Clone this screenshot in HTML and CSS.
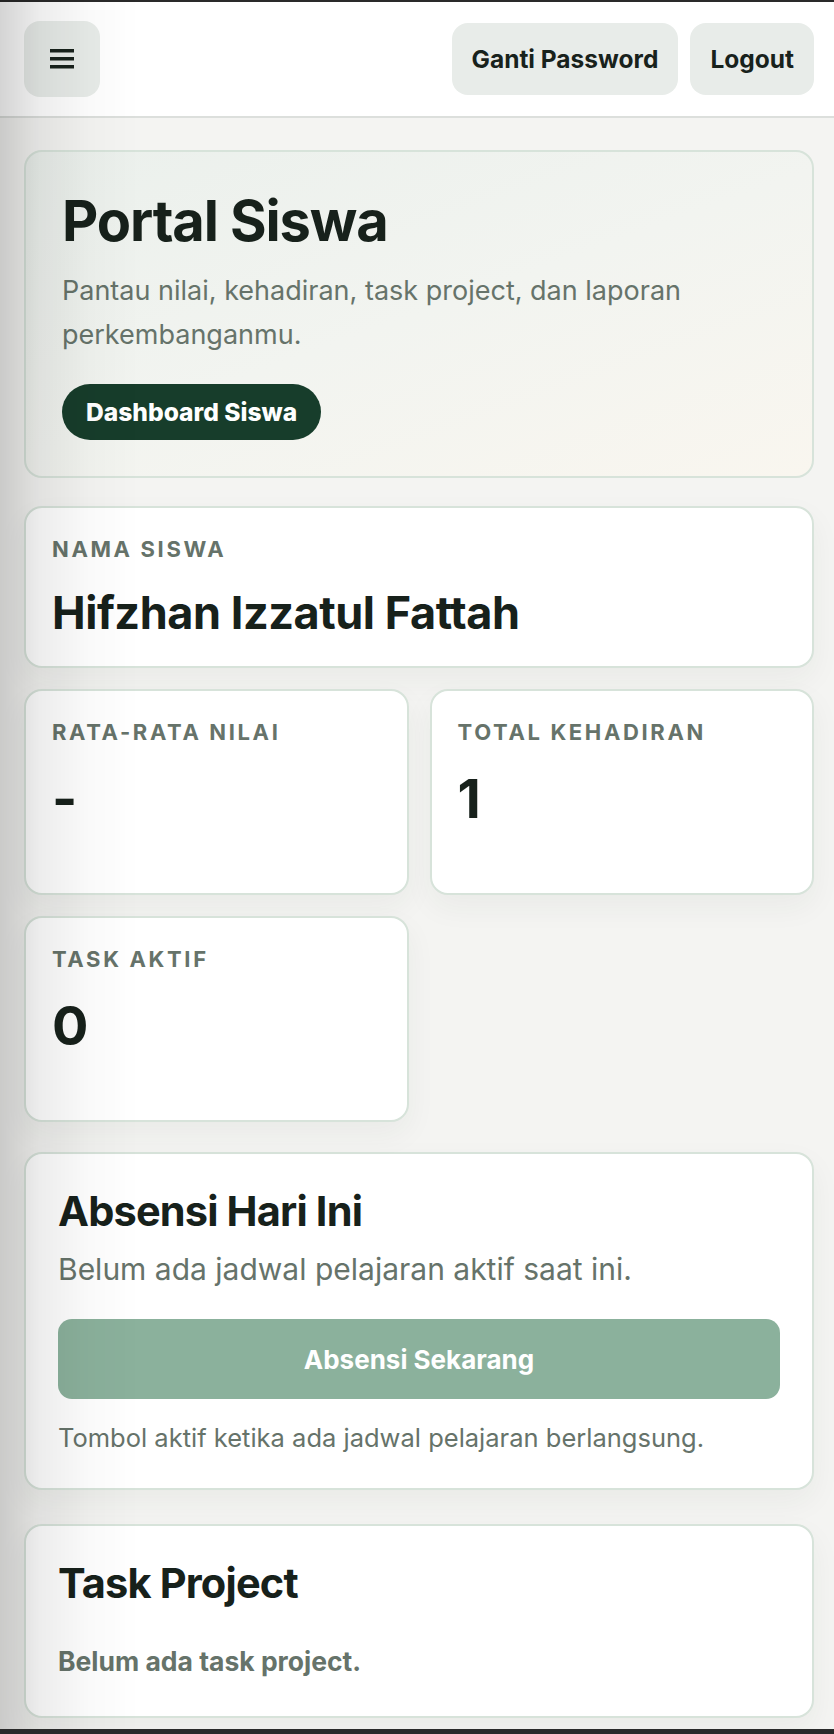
FILE: index.html
```html
<!DOCTYPE html>
<html lang="id">

<head>
    <meta charset="UTF-8">
    <meta name="viewport" content="width=device-width, initial-scale=1.0">
    <title>Portal Siswa</title>
    <link rel="stylesheet" href="styles.css">
</head>

<body>
    <div class="edge-shade"></div>

    <header class="topbar">
        <button class="menu-btn" aria-label="Menu">
            <svg width="24" height="20" viewBox="0 0 24 20">
                <rect x="0" y="0" width="24" height="3.5" fill="#18221c" />
                <rect x="0" y="8" width="24" height="3.5" fill="#18221c" />
                <rect x="0" y="16" width="24" height="3.5" fill="#18221c" />
            </svg>
        </button>
        <div class="topbar-actions">
            <button class="btn-soft">Ganti Password</button>
            <button class="btn-soft">Logout</button>
        </div>
    </header>

    <main class="page">
        <section class="hero">
            <h1>Portal Siswa</h1>
            <p>Pantau nilai, kehadiran, task project, dan laporan perkembanganmu.</p>
            <a class="pill" href="#">Dashboard Siswa</a>
        </section>

        <section class="stats">
            <div class="card stat stat-wide">
                <div class="stat-label">Nama Siswa</div>
                <div class="stat-name">Hifzhan Izzatul Fattah</div>
            </div>
            <div class="card stat">
                <div class="stat-label">Rata-rata Nilai</div>
                <div class="stat-value">-</div>
            </div>
            <div class="card stat">
                <div class="stat-label">Total Kehadiran</div>
                <div class="stat-value">1</div>
            </div>
            <div class="card stat">
                <div class="stat-label">Task Aktif</div>
                <div class="stat-value">0</div>
            </div>
        </section>

        <section class="card panel panel-absensi">
            <h2>Absensi Hari Ini</h2>
            <p class="panel-sub">Belum ada jadwal pelajaran aktif saat ini.</p>
            <button class="btn-absen" disabled>Absensi Sekarang</button>
            <p class="panel-note">Tombol aktif ketika ada jadwal pelajaran berlangsung.</p>
        </section>

        <section class="card panel">
            <h2>Task Project</h2>
            <p class="empty">Belum ada task project.</p>
        </section>
    </main>

    <div class="frame-bottom"></div>
</body>

</html>
```

FILE: styles.css
```css
* {
    box-sizing: border-box;
}

body {
    margin: 0;
    border-top: 2px solid #2a2a2a;
    background: #f4f4f2;
    color: #17211b;
    font-family: Inter, "Noto Sans", sans-serif;
}

/* bayangan tepi kiri */
.edge-shade {
    position: fixed;
    top: 0;
    left: 0;
    bottom: 0;
    width: 140px;
    pointer-events: none;
    z-index: 10;
    background: linear-gradient(90deg, rgba(0, 0, 0, 0.17) 0, rgba(0, 0, 0, 0.07) 40px, rgba(0, 0, 0, 0.02) 90px, rgba(0, 0, 0, 0) 140px);
}

.frame-bottom {
    position: fixed;
    left: 0;
    right: 0;
    bottom: 0;
    height: 5px;
    background: #2a2a2a;
    z-index: 11;
}

.topbar {
    display: flex;
    align-items: center;
    justify-content: space-between;
    padding: 19px 20px 19px 24px;
    background: #fff;
    border-bottom: 2px solid #dcdfdc;
}

.menu-btn {
    width: 76px;
    height: 76px;
    border: 0;
    border-radius: 16px;
    background: #e8ece9;
    display: flex;
    align-items: center;
    justify-content: center;
    padding: 0;
}

.topbar-actions {
    display: flex;
    gap: 12px;
}

.btn-soft {
    height: 72px;
    padding: 0 20px;
    border: 0;
    border-radius: 16px;
    background: #e8ece9;
    color: #18221c;
    font-family: inherit;
    font-size: 24.5px;
    font-weight: 700;
}

.page {
    padding: 32px 20px 40px 24px;
}

.hero {
    padding: 36px;
    border: 2px solid #d7e3da;
    border-radius: 18px;
    background: linear-gradient(160deg, #ebf0ec 0%, #f2f4f0 50%, #f9f6ef 100%);
    margin-bottom: 28px;
}

.hero h1 {
    margin: 0;
    font-size: 56px;
    line-height: 1.2;
    font-weight: 700;
    letter-spacing: -0.02em;
}

.hero p {
    margin: 14px 0 28px;
    font-size: 27px;
    line-height: 43.5px;
    color: #66736a;
}

.pill {
    display: inline-flex;
    align-items: center;
    height: 56px;
    padding: 0 24px;
    border-radius: 28px;
    background: #173d2b;
    color: #fff;
    font-size: 24.6px;
    font-weight: 800;
    text-decoration: none;
}

.card {
    background: #fff;
    border: 2px solid #d7e3da;
    border-radius: 18px;
    box-shadow: 0 12px 30px rgba(30, 50, 40, 0.05);
}

.stats {
    display: grid;
    grid-template-columns: 1fr 1fr;
    gap: 21px 21px;
    margin-bottom: 30px;
}

.stat {
    padding: 26px;
    min-height: 206px;
}

.stat-wide {
    grid-column: span 2;
    min-height: 0;
}

.stat-label {
    font-size: 22px;
    line-height: 1.4;
    font-weight: 700;
    letter-spacing: 0.12em;
    text-transform: uppercase;
    color: #66736a;
}

.stat-name {
    margin-top: 21px;
    font-size: 45px;
    line-height: 1.2;
    font-weight: 700;
    letter-spacing: -0.01em;
}

.stat-value {
    margin-top: 19px;
    font-size: 54px;
    line-height: 1.2;
    font-weight: 700;
}

.panel {
    padding: 32px;
}

.panel-absensi {
    margin-bottom: 34px;
}

.panel h2 {
    margin: 0;
    font-size: 41.5px;
    line-height: 50px;
    font-weight: 700;
    letter-spacing: -0.02em;
}

.panel-sub {
    margin: 13px 0 30px;
    font-size: 30px;
    line-height: 40.5px;
    color: #66736a;
}

.btn-absen {
    display: block;
    width: 100%;
    height: 80px;
    border: 0;
    border-radius: 14px;
    background: #8bb19c;
    color: #fff;
    font-family: inherit;
    font-size: 26px;
    font-weight: 700;
}

.panel-note {
    margin: 21px 0 0;
    font-size: 25.5px;
    line-height: 36px;
    color: #66736a;
}

.empty {
    margin: 35px 0 5px;
    font-size: 26.5px;
    line-height: 36px;
    font-weight: 700;
    color: #66736a;
}
```
